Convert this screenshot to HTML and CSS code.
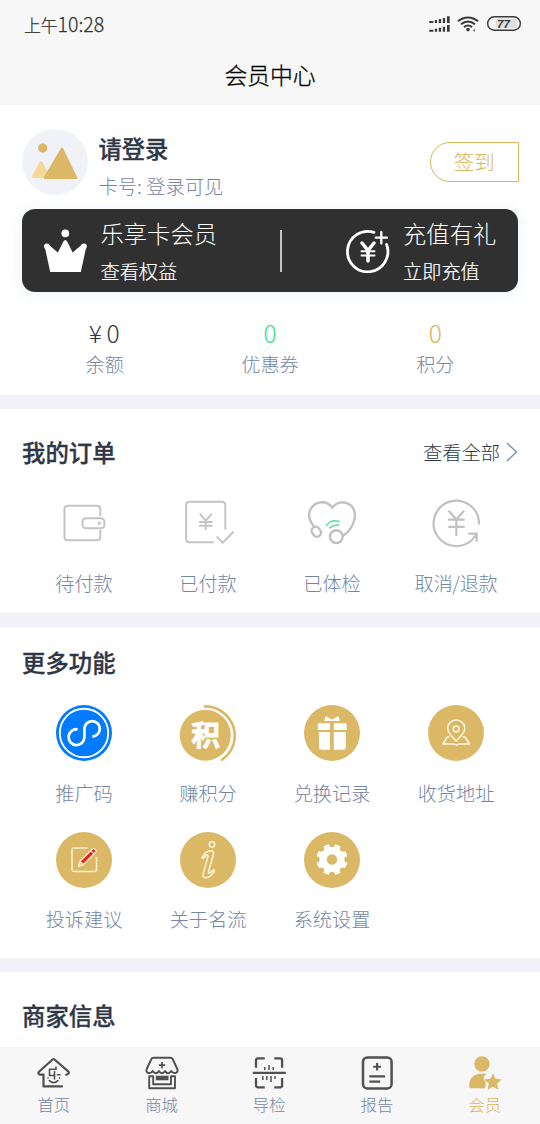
FILE: index.html
```html
<!DOCTYPE html>
<html lang="zh-CN">
<head>
<meta charset="utf-8">
<title>会员中心</title>
<link rel="stylesheet" href="styles.css">
</head>
<body>
<div class="app">
  <header class="header">
    <div class="status">
      <div class="time">上午<span class="digits">10:28</span></div>
      <svg class="status-icons" viewBox="0 0 94 20">
        <g fill="#3a3a3a">
          <path d="M1.3 7h4v2h-4zM6.8 6h2.3v3H6.8zM10.8 5h2.3v4h-2.3zM14.8 4h2.3v5h-2.3zM19 2.3h2.7V9H19z"/>
          <path d="M1.3 15.7h4v2h-4zM6.8 14.7h2.3v3H6.8zM10.8 13.7h2.3v4h-2.3zM14.8 12.7h2.3v5h-2.3zM19 11h2.7v6.7H19z"/>
          <circle cx="40" cy="15.600" r="1.800"/>
          <path d="M47 14.500l-2.500 2 2.500 1.500z" opacity=".6"/>
        </g>
        <g fill="none" stroke="#3a3a3a" stroke-width="2">
          <path d="M30 7.200c6-5 14-5 20 0M33 10.200c4.300-3.500 9.700-3.500 14 0M36 13.100c2.500-2 5.500-2 8 0"/>
        </g>
        <rect x="68" y="4.500" width="21" height="9.500" rx="3" fill="#dedede"/>
        <rect x="59.700" y="2.700" width="32.600" height="13.600" rx="6.600" fill="none" stroke="#3a3a3a" stroke-width="1.400"/>
        <text x="75.500" y="13.800" class="battery">77</text>
      </svg>
    </div>
    <h1 class="title">会员中心</h1>
  </header>

  <section class="profile">
    <div class="user">
      <svg class="avatar" viewBox="0 0 66 66">
        <circle cx="33" cy="33" r="33" fill="#f1f2f8"/>
        <circle cx="20.700" cy="19" r="4.600" fill="#dbb866"/>
        <path d="M19 33.500L11.500 47.500H26z" fill="#f5d998" stroke="#f5d998" stroke-width="3" stroke-linejoin="round"/>
        <path d="M40 20L23 48.700H54z" fill="#dbb866" stroke="#dbb866" stroke-width="2.600" stroke-linejoin="round"/>
      </svg>
      <div class="user-text">
        <div class="name">请登录</div>
        <div class="card-no">卡号: 登录可见</div>
      </div>
      <div class="sign">签到</div>
    </div>
    <div class="vip">
      <div class="vip-item">
        <svg class="vip-icon" viewBox="0 0 44 44" fill="#fff">
          <circle cx="21.300" cy="4.300" r="3.900"/>
          <circle cx="2.900" cy="17.300" r="2.900"/>
          <circle cx="39.900" cy="17.300" r="2.900"/>
          <path d="M1 19l3.500-3.500 9.300 8 5.500-10.800q2-3.400 4 0l5.400 10.800 9.300-8L42 19l-5.200 24H6.200z"/>
        </svg>
        <div class="vip-text"><b>乐享卡会员</b><span>查看权益</span></div>
      </div>
      <div class="vip-line"></div>
      <div class="vip-item vip-charge">
        <svg class="vip-icon" viewBox="0 0 44 44" fill="none" stroke="#fff" stroke-linecap="round">
          <path d="M28 3.400A20.200 20.200 0 1 0 40.600 15.500" stroke-width="2.800"/>
          <path d="M35.300 3v11.400M29.700 8.700H41" stroke-width="2.300"/>
          <path d="M16 14l6 7.500 6-7.500M22 21.500V32" stroke-width="3.500"/>
          <path d="M15.500 22.300h13M15.500 26.600h13" stroke-width="2"/>
        </svg>
        <div class="vip-text"><b>充值有礼</b><span>立即充值</span></div>
      </div>
    </div>
    <div class="stats">
      <div class="stat"><div class="num money"><span>¥</span><span>0</span></div><div class="label">余额</div></div>
      <div class="stat"><div class="num green">0</div><div class="label">优惠券</div></div>
      <div class="stat"><div class="num gold">0</div><div class="label">积分</div></div>
    </div>
  </section>

  <section class="orders">
    <div class="head">
      <h2>我的订单</h2>
      <div class="all">查看全部
        <svg class="chevron" viewBox="0 0 12 20"><path d="M1 1l9.500 9L1 19" fill="none" stroke="#7f93b2" stroke-width="1.500"/></svg>
      </div>
    </div>
    <div class="grid">
      <div class="cell">
        <svg class="icon" viewBox="0 0 56 56" fill="none" stroke="#c4c4c4" stroke-width="2" stroke-linecap="round">
          <path d="M44.300 20.300V14q0-3.300-3.300-3.300H11.800q-3.300 0-3.300 3.300v27.900q0 3.300 3.300 3.300H41q3.300 0 3.300-3.300v-6.200"/>
          <rect x="26.400" y="23.200" width="22" height="10" rx="3.500"/>
          <circle cx="43.300" cy="28.200" r=".6"/>
        </svg>
        <div class="label">待付款</div>
      </div>
      <div class="cell">
        <svg class="icon" viewBox="0 0 56 56" fill="none" stroke="#c4c4c4" stroke-width="2" stroke-linecap="round">
          <path d="M45.300 33.800V10.200q0-3.500-3.500-3.500H9.600q-3.500 0-3.500 3.500v33.600q0 3.500 3.500 3.500H33M37.300 42.300l5.500 5.300L53 37.300"/>
          <path d="M20.300 19.300l5.400 6.500 5.400-6.500M25.700 26v8.500M19.800 27h12M19.800 30.700h12"/>
        </svg>
        <div class="label">已付款</div>
      </div>
      <div class="cell">
        <svg class="icon" viewBox="0 0 56 56" fill="none" stroke="#c1c1c1" stroke-width="2.400" stroke-linecap="round">
          <path d="M9.700 31C5 25 4.300 19 6.300 14.800 10.500 6 22 4.500 28.300 12.500 34.600 4.500 46.500 6.300 50 15c3 8.500-2.200 20-10.500 25.500"/>
          <rect x="8.300" y="31.500" width="8" height="10.400" rx="4" transform="rotate(-35 12.300 36.700)"/>
          <circle cx="32.300" cy="41.600" r="6.400"/>
          <path d="M22.500 30.500q4.500-6.700 12.800-4M25.700 33q4-4 9-2.800" stroke="#60e09b" stroke-width="1.500"/>
        </svg>
        <div class="label">已体检</div>
      </div>
      <div class="cell">
        <svg class="icon" viewBox="0 0 56 56" fill="none" stroke="#c1c1c1" stroke-width="2.200" stroke-linecap="round">
          <path d="M51 28.700A22.700 22.700 0 1 0 47.500 40.500M41.200 38.700h7.500V46M21.200 16.300l7.100 8.200 7.200-8.200M28.300 24.500v15.600M21 24.700h14.800M21 31.800h14.800"/>
        </svg>
        <div class="label refund">取消/退款</div>
      </div>
    </div>
  </section>

  <section class="more">
    <div class="head"><h2>更多功能</h2></div>
    <div class="grid">
      <div class="cell">
        <svg class="icon" viewBox="0 0 56 56">
          <circle cx="28" cy="28" r="28" fill="#027bff"/>
          <g fill="none" stroke="#fff">
            <circle cx="28" cy="28" r="24.200" stroke-width="1.900"/>
            <path d="M21.500 24.300a7.900 7.900 0 1 0 6.900 8V23.500a7.700 7.700 0 1 1 8 8" stroke-width="2.800"/>
          </g>
        </svg>
        <div class="label">推广码</div>
      </div>
      <div class="cell">
        <svg class="icon" viewBox="0 0 56 56">
          <circle cx="25.300" cy="30.300" r="25.500" fill="#dbb866"/>
          <path d="M25 1.400A29.600 29.600 0 0 1 54.800 31Q54.500 46 42 54.700" fill="none" stroke="#dbb866" stroke-width="2.600" stroke-linecap="round"/>
          <text x="25.800" y="41" class="points">积</text>
        </svg>
        <div class="label">赚积分</div>
      </div>
      <div class="cell">
        <svg class="icon" viewBox="0 0 56 56">
          <circle cx="28" cy="28" r="28" fill="#dbb866"/>
          <g fill="#fff">
            <path d="M20.400 16l.7-3.800q.3-1.200 1.500-.7l5.400 3.300 5.400-3.300q1.200-.5 1.500.7l.7 3.800z"/>
            <path d="M15.200 18.300H26V25H13.800v-5.300q0-1.400 1.400-1.400zM29.800 18.300h11.500q1.400 0 1.400 1.400V25H29.800z"/>
            <path d="M15 27h11v17.700h-8q-3 0-3-3zM29.800 27h12v14.700q0 3-3 3h-9z"/>
          </g>
        </svg>
        <div class="label">兑换记录</div>
      </div>
      <div class="cell">
        <svg class="icon" viewBox="0 0 56 56">
          <circle cx="28" cy="28" r="28" fill="#dbb866"/>
          <g fill="none" stroke="#fff6e2" stroke-width="1.500" stroke-linejoin="round">
            <path d="M28.200 36.200c-4-4.400-8.500-8.500-8.500-12.800a8.500 8.500 0 0 1 17 0c0 4.300-4.500 8.400-8.500 12.800z"/>
            <circle cx="28.200" cy="24" r="2.900"/>
            <path d="M21.500 32h-2.300L15 39h10.500q1.500 0 2.700 1.300Q29.400 39 31 39h10.500l-4.500-7h-2.500"/>
          </g>
        </svg>
        <div class="label">收货地址</div>
      </div>
      <div class="cell">
        <svg class="icon" viewBox="0 0 56 56">
          <circle cx="28" cy="28" r="28" fill="#dbb866"/>
          <path d="M31.300 16H18q-2 0-2 2v19.500q0 2 2 2h20.500q2 0 2-2V25" fill="none" stroke="#fbedce" stroke-width="1.600"/>
          <path d="M22.500 34.300l1.500-5L36.500 17q1.300-.8 2.700.5 1.300 1.400.5 2.700L27.300 32.500z" fill="#e22718" stroke="#fff1d9" stroke-width="1.300" stroke-linejoin="round"/>
          <path d="M22.800 34l1.500-4.500 2.800 2.700zM34.700 18.600l3.300 3.300" fill="#dbb866" stroke="#fff1d9" stroke-width="1.200"/>
        </svg>
        <div class="label">投诉建议</div>
      </div>
      <div class="cell">
        <svg class="icon" viewBox="0 0 56 56">
          <circle cx="28" cy="28" r="28" fill="#dbb866"/>
          <g fill="none" stroke="#fff3da" stroke-width="1.500" stroke-linejoin="round">
            <circle cx="32" cy="12.500" r="2.700"/>
            <path d="M22 25.700c2-4.300 5.500-7 9-7 2.500 0 3 1.500 2.300 4l-4.700 16.500c-.7 2.700.7 2.300 2 1l3-2.700.8 1.700c-2.500 4-5.500 6.500-8.500 6.500-2.500 0-3.300-1.700-2.600-4.300l4.600-16.500c.5-2.500-.7-2.500-2-1.300L23 26.500z"/>
          </g>
        </svg>
        <div class="label">关于名流</div>
      </div>
      <div class="cell">
        <svg class="icon" viewBox="0 0 56 56">
          <circle cx="28" cy="28" r="28" fill="#dbb866"/>
          <circle cx="28" cy="27.500" r="15.500" fill="#fff"/>
          <g fill="#dbb866">
            <circle cx="28" cy="27.500" r="5.200"/>
            <circle cx="28" cy="12.300" r="2.900"/><circle cx="28" cy="42.700" r="2.900"/>
            <circle cx="12.800" cy="27.500" r="2.900"/><circle cx="43.200" cy="27.500" r="2.900"/>
            <circle cx="17.200" cy="16.700" r="2.900"/><circle cx="38.800" cy="16.700" r="2.900"/>
            <circle cx="17.200" cy="38.300" r="2.900"/><circle cx="38.800" cy="38.300" r="2.900"/>
          </g>
        </svg>
        <div class="label">系统设置</div>
      </div>
    </div>
  </section>

  <section class="merchant">
    <div class="head"><h2>商家信息</h2></div>
  </section>

  <nav class="tabs">
    <div class="tab">
      <svg class="tab-icon" viewBox="0 0 36 36" fill="none" stroke="#505050" stroke-width="2.200" stroke-linejoin="round" stroke-linecap="round">
        <path d="M26 31.400H7.500V19.700H4.200q-3-.9-1.200-3L16.500 4.500q1-.8 2 0l14 12.200q1.500 2-2.300 3"/>
        <path d="M20 12v2.200h-6.500v6.300h5M18.500 16.500V24M21.500 19.800h2.500M13.300 25.700q4.300 4 8.700 0M12 23v.1M23.500 23v.1" stroke-width="1.600"/>
      </svg>
      <span>首页</span>
    </div>
    <div class="tab">
      <svg class="tab-icon" viewBox="0 0 36 36" fill="none" stroke="#505050" stroke-width="2" stroke-linejoin="round">
        <path d="M9.500 2.700h17q1.500 0 2.200 1.500l4.800 10.300q.7 3.500-3 3.500-2 0-3.200-2-1.500 2.200-3.200 2.200-1.700 0-3-2.200-1.500 2.200-3.100 2.200t-3.100-2.200q-1.300 2.200-3 2.200-1.700 0-3.200-2.200-1.200 2-3.200 2-3.700 0-3-3.500L7.300 4.200Q8 2.700 9.500 2.700z"/>
        <path d="M18 7v6.400M14.800 10.200h6.400" stroke-width="1.700"/>
        <path d="M5.200 21.200h4v8h17.800v-8h4v12.100H5.200z" stroke-width="1.900"/>
        <path d="M11.800 20.700h12.700v4.600H11.800z" fill="#505050" stroke="none"/>
      </svg>
      <span>商城</span>
    </div>
    <div class="tab">
      <svg class="tab-icon" viewBox="0 0 36 36" fill="none" stroke="#505050" stroke-width="2.300">
        <path d="M5 12.700V5.300q0-2 2-2h6.700M23.300 3.300h5.800q2 0 2 2v7.400M5 23v7.300q0 2 2 2h6.700M23.300 32.300h5.800q2 0 2-2V23M1.800 17.800h33"/>
        <path d="M13.800 12v3M18 10v5M22.200 12v3M11.800 21v4M15.800 21v4M20 21v6M24 21v3" stroke-width="1.500"/>
      </svg>
      <span>导检</span>
    </div>
    <div class="tab">
      <svg class="tab-icon" viewBox="0 0 36 36" fill="none" stroke="#505050" stroke-width="2.500">
        <rect x="4" y="2.400" width="28.600" height="31" rx="4.500"/>
        <path d="M18.100 8v7.600M14.200 11.700H22M10.400 21.400h15.700M10.400 26.600h10.800" stroke-width="2.100"/>
      </svg>
      <span>报告</span>
    </div>
    <div class="tab active">
      <svg class="tab-icon" viewBox="0 0 36 36" fill="#dbb866">
        <circle cx="15" cy="9" r="7.700"/>
        <path d="M11.500 18.700H20q-3.500 2-3.300 5 0 1.300 1.500 2.500.8 1 .6 2.500l-.8 4.500H4q-2 0-1.800-3.200.5-9.300 9.300-11.300z"/>
        <path d="M26 18.300l2.500 5.500 6.200.7-4.600 4.200 1.300 6-5.400-3-5.400 3 1.200-6-4.500-4.200 6.200-.7z"/>
      </svg>
      <span>会员</span>
    </div>
  </nav>
</div>
</body>
</html>
```
FILE: styles.css
```css
* { box-sizing: border-box; }
body {
  margin: 0;
  background: #fff;
  font-family: "Noto Sans CJK SC", sans-serif;
  font-weight: 300;
  color: #2f3646;
}
h1, h2, b { margin: 0; font-weight: inherit; }
svg { display: block; flex: none; }
.app {
  width: 540px;
  height: 1124px;
  overflow: hidden;
  display: flex;
  flex-direction: column;
}
.header { height: 105px; flex: none; background: #f7f7f7; }
.status {
  height: 48px;
  padding: 0 18px 0 24px;
  display: flex;
  align-items: center;
  justify-content: space-between;
}
.time {
  font-size: 16.800px;
  line-height: 24px;
  color: #333;
  white-space: nowrap;
  -webkit-text-stroke: .25px;
}
.digits { font-size: 19.500px; }
.status-icons { width: 94px; height: 20px; }
.battery {
  font: italic 700 11.500px "Liberation Sans", sans-serif;
  fill: #3a3a3a;
  text-anchor: middle;
}
.title {
  height: 54px;
  line-height: 54px;
  text-align: center;
  font-size: 22.800px;
  font-weight: 300;
  color: #000;
  -webkit-text-stroke: .3px;
}
.profile { height: 304px; flex: none; padding: 24px 22px 0; border-bottom: 14px solid #f2f1f8; }
.user { height: 80px; display: flex; align-items: flex-start; }
.avatar { width: 66px; height: 66px; }
.user-text { flex: 1; padding-left: 10.500px; }
.name { font-size: 23.300px; line-height: 38px; font-weight: 500; -webkit-text-stroke: .3px; }
.card-no { font-size: 19.300px; line-height: 38px; color: #7386a5; }
.sign {
  width: 88.500px;
  height: 40px;
  margin: 13px -.5px 0 0;
  border: 1.500px solid #dbb45c;
  border-radius: 20px 0 0 20px;
  font-size: 20.500px;
  line-height: 37px;
  text-align: center;
  color: #dbb45c;
}
.vip {
  height: 83px;
  border-radius: 13px;
  background: #303030;
  color: #fff;
  display: flex;
  align-items: center;
  padding-left: 22px;
  box-shadow: 0 2px 16px rgba(80, 120, 160, .1);
}
.vip-item { display: flex; align-items: center; width: 237.500px; }
.vip-icon { width: 44px; height: 44px; }
.vip-text { display: flex; flex-direction: column; padding: 3px 0 0 12.500px; white-space: nowrap; }
.vip-text b { font-size: 23.300px; line-height: 38px; }
.vip-text span { font-size: 19.200px; line-height: 38px; -webkit-text-stroke: .2px; }
.vip-line { width: 1.500px; height: 42px; background: #c4c4c4; }
.vip-charge { padding-left: 64px; }
.vip-charge .vip-text { padding-left: 13.500px; }
.stats { display: grid; grid-template-columns: repeat(3, 1fr); padding-top: 24px; text-align: center; }
.num { height: 34px; font-size: 24.500px; line-height: 34px; }
.money { display: flex; justify-content: center; gap: 4.500px; padding-right: 1px; }
.green { color: #46dc82; }
.gold { color: #dbb45c; }
.label { font-size: 19.200px; line-height: 28px; color: #7386a5; white-space: nowrap; }
.refund { letter-spacing: -.3px; }
.orders { height: 218px; flex: none; padding: 0 22px; border-bottom: 14px solid #f2f1f8; }
.head { height: 86px; display: flex; align-items: center; justify-content: space-between; }
.head h2 {
  font-size: 23.400px;
  line-height: 34px;
  font-weight: 500;
  -webkit-text-stroke: .3px;
}
.orders h2, .more h2, .merchant h2 { padding-bottom: 1px; }
.all { display: flex; align-items: center; gap: 6px; font-size: 19.300px; line-height: 28px; }
.chevron { width: 12px; height: 20px; }
.grid { display: grid; grid-template-columns: repeat(4, 1fr); }
.cell { display: flex; flex-direction: column; align-items: center; gap: 17.500px; }
.icon { width: 56px; height: 56px; }
.points {
  font: 700 28.500px "Noto Sans CJK SC", sans-serif;
  fill: #fff;
  stroke: #fff;
  stroke-width: .8px;
  text-anchor: middle;
}
.more { height: 345px; flex: none; padding: 0 22px; border-bottom: 14px solid #f2f1f8; }
.more .head { height: 78px; padding-bottom: 8px; }
.more .grid { row-gap: 25px; }
.merchant { height: 75px; flex: none; padding: 0 22px; }
.tabs {
  height: 77px;
  flex: none;
  background: #f7f7f7;
  display: grid;
  grid-template-columns: repeat(5, 1fr);
  padding: 8px 1.500px 0 0;
}
.tab { display: flex; flex-direction: column; align-items: center; font-size: 16.400px; line-height: 26px; color: #7386a5; }
.tab-icon { width: 36px; height: 36px; }
.tab.active { color: #dbb45c; }
```
